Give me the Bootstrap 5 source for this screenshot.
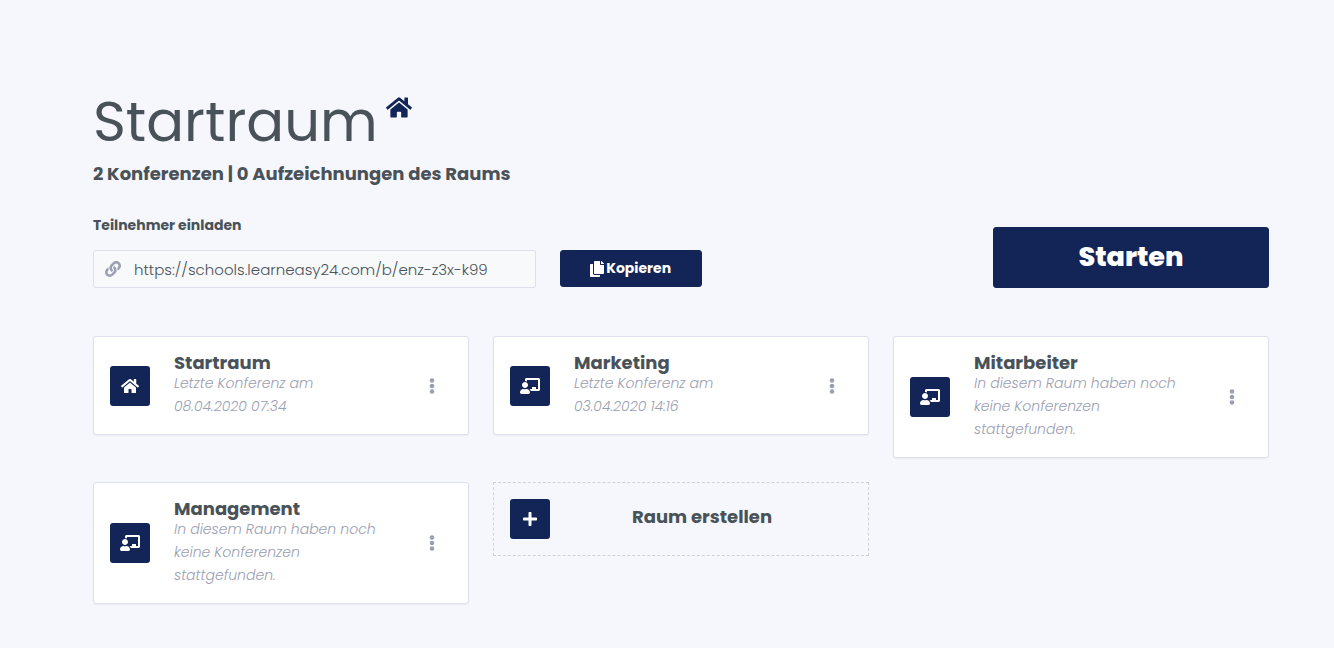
<!DOCTYPE html>
<html lang="de">
<head>
<meta charset="utf-8">
<meta name="viewport" content="width=device-width, initial-scale=1">
<title>Startraum</title>
<link href="https://cdn.jsdelivr.net/npm/bootstrap@5.3.0/dist/css/bootstrap.min.css" rel="stylesheet">
<style>
:root { --navy: #132456; --ink: #495259; --soft: #9aa0b2; --line: #dce0ed; }
body { background: #f6f7fc; color: var(--ink); font-family: Poppins, Inter, "Liberation Sans", sans-serif; font-size: 15px; }
.page { padding: 88px 65px 40px 93px; }
.icon { fill: currentColor; flex: none; display: block; }
.room-title { font-size: 56px; font-weight: 400; line-height: 67px; }
.room-title svg { color: var(--navy); margin-top: 8px; }
.room-stats { font-size: 18px; font-weight: 700; line-height: 22px; margin-top: 8px; }
.invite-label { font-size: 14px; font-weight: 700; line-height: 20px; margin-bottom: 15px; }
.invite-row { margin-top: 30px; }
.invite-field .input-group-text { background: #f8f9fb; border-color: var(--line); color: var(--soft); border-radius: 3px; padding: 0 13px 0 11px; }
.invite-field .form-control { background: #f8f9fb; border-color: var(--line); border-left: 0; color: var(--ink); font-size: 15px; font-weight: 300; height: 38px; padding: 0; border-radius: 3px; }
.btn-navy { --bs-btn-bg: var(--navy); --bs-btn-color: #fff; --bs-btn-border-color: var(--navy); --bs-btn-hover-bg: #1d3272; --bs-btn-hover-color: #fff; --bs-btn-active-bg: #0d1a40; --bs-btn-active-color: #fff; --bs-btn-border-radius: 3px; font-weight: 700; }
.btn-copy { width: 142px; height: 37px; font-size: 14px; padding: 0; gap: 2px; }
.btn-start { height: 61px; font-size: 27px; font-weight: 800; line-height: 1; padding: 0 0 2px; }
.rooms { margin-top: 24px; }
.room-card { border: 1px solid var(--line); border-radius: 3px; box-shadow: 0 1px 2px rgba(0, 0, 0, .05); color: var(--ink); }
.room-card .card-body { padding: 16px; }
.tile { width: 40px; height: 40px; border-radius: 3px; background: var(--navy); color: #fff; flex: none; }
.room-name { font-size: 18px; font-weight: 700; line-height: 19px; margin: 0; }
.room-info { font-size: 14px; font-style: italic; font-weight: 300; line-height: 23px; color: var(--soft); margin: 0; }
.room-text { width: 210px; }
.menu-btn { color: var(--soft); width: 20px; height: 24px; margin-right: 10px; }
.room-new { border: 1px dashed #d0d2d6; background: transparent; box-shadow: none; border-radius: 0; }
.room-new .room-name { padding: 0 22px 6px 0; }
</style>
</head>
<body>
<svg class="d-none" aria-hidden="true">
  <symbol id="home" viewBox="0 0 576 512"><path d="M280.37 148.26L96 300.11V464a16 16 0 0 0 16 16l112.06-.29a16 16 0 0 0 15.92-16V368a16 16 0 0 1 16-16h64a16 16 0 0 1 16 16v95.64a16 16 0 0 0 16 16.05L464 480a16 16 0 0 0 16-16V300L295.67 148.26a12.19 12.19 0 0 0-15.3 0zM571.6 251.47L488 182.56V44.05a12 12 0 0 0-12-12h-56a12 12 0 0 0-12 12v72.61L318.47 43a48 48 0 0 0-61 0L4.34 251.47a12 12 0 0 0-1.6 16.9l25.5 31A12 12 0 0 0 45.15 301l235.22-193.74a12.19 12.19 0 0 1 15.3 0L530.9 301a12 12 0 0 0 16.9-1.6l25.5-31a12 12 0 0 0-1.7-16.93z"/></symbol>
  <symbol id="link" viewBox="0 0 512 512"><path d="M326.612 185.391c59.747 59.809 58.927 155.698.36 214.59-.11.12-.24.25-.36.37l-67.2 67.2c-59.27 59.27-155.699 59.262-214.96 0-59.27-59.26-59.27-155.7 0-214.96l37.106-37.106c9.84-9.84 26.786-3.3 27.294 10.606.648 17.722 3.826 35.527 9.69 52.721 1.986 5.822.567 12.262-3.783 16.612l-13.087 13.087c-28.026 28.026-28.905 73.66-1.155 101.96 28.024 28.579 74.086 28.749 102.325.51l67.2-67.19c28.191-28.191 28.073-73.757 0-101.83-3.701-3.694-7.429-6.564-10.341-8.569a16.037 16.037 0 0 1-6.947-12.606c-.396-10.567 3.348-21.456 11.698-29.806l21.054-21.055c5.521-5.521 14.182-6.199 20.584-1.731a152.482 152.482 0 0 1 20.522 17.197zM467.547 44.449c-59.261-59.262-155.69-59.27-214.96 0l-67.2 67.2c-.12.12-.25.25-.36.37-58.566 58.892-59.387 154.781.36 214.59a152.454 152.454 0 0 0 20.521 17.196c6.402 4.468 15.064 3.789 20.584-1.731l21.054-21.055c8.35-8.35 12.094-19.239 11.698-29.806a16.037 16.037 0 0 0-6.947-12.606c-2.912-2.005-6.64-4.875-10.341-8.569-28.073-28.073-28.191-73.639 0-101.83l67.2-67.19c28.239-28.239 74.3-28.069 102.325.51 27.75 28.3 26.872 73.934-1.155 101.96l-13.087 13.087c-4.35 4.35-5.769 10.79-3.783 16.612 5.864 17.194 9.042 34.999 9.69 52.721.509 13.906 17.454 20.446 27.294 10.606l37.106-37.106c59.271-59.259 59.271-155.699.001-214.959z"/></symbol>
  <symbol id="copy" viewBox="0 0 448 512"><path d="M320 448v40c0 13.255-10.745 24-24 24H24c-13.255 0-24-10.745-24-24V120c0-13.255 10.745-24 24-24h72v296c0 30.879 25.121 56 56 56h168zm0-344V0H152c-13.255 0-24 10.745-24 24v368c0 13.255 10.745 24 24 24h272c13.255 0 24-10.745 24-24V128H344c-13.2 0-24-10.8-24-24zm120.971-31.029L375.029 7.029A24 24 0 0 0 358.059 0H352v96h96v-6.059a24 24 0 0 0-7.029-16.97z"/></symbol>
  <symbol id="teacher" viewBox="0 0 640 512"><path d="M208 352c-2.39 0-4.78.35-7.06 1.09C187.98 357.3 174.35 360 160 360c-14.35 0-27.98-2.7-40.95-6.91-2.28-.74-4.66-1.09-7.05-1.09C49.94 352-.33 402.48 0 464.62.14 490.88 21.73 512 48 512h224c26.27 0 47.86-21.12 48-47.38.33-62.14-49.94-112.62-112-112.62zm-48-32c53.02 0 96-42.98 96-96s-42.98-96-96-96-96 42.98-96 96 42.98 96 96 96zM592 0H208c-26.47 0-48 22.25-48 49.59V96c23.42 0 45.1 6.78 64 17.8V64h352v288h-64v-64H384v64h-76.24c19.1 16.69 33.12 38.73 39.69 64H592c26.47 0 48-22.25 48-49.59V49.59C640 22.25 618.47 0 592 0z"/></symbol>
  <symbol id="plus" viewBox="0 0 448 512"><path d="M416 208H272V64c0-17.67-14.33-32-32-32h-32c-17.67 0-32 14.33-32 32v144H32c-17.67 0-32 14.33-32 32v32c0 17.67 14.33 32 32 32h144v144c0 17.67 14.33 32 32 32h32c17.67 0 32-14.33 32-32V304h144c17.67 0 32-14.33 32-32v-32c0-17.67-14.33-32-32-32z"/></symbol>
  <symbol id="dots" viewBox="0 0 6 16"><circle cx="3" cy="2.5" r="2.3"/><circle cx="3" cy="8" r="2.3"/><circle cx="3" cy="13.5" r="2.3"/></symbol>
</svg>

<main class="page">
  <h1 class="room-title d-flex align-items-start gap-2 m-0">Startraum
    <svg class="icon" width="26" height="23"><use href="#home"/></svg>
  </h1>
  <p class="room-stats mb-0">2 Konferenzen | 0 Aufzeichnungen des Raums</p>

  <form class="row invite-row">
    <div class="col-8">
      <label class="invite-label d-block" for="invite">Teilnehmer einladen</label>
      <div class="row">
        <div class="col-7">
          <div class="input-group invite-field">
            <span class="input-group-text"><svg class="icon" width="16" height="16"><use href="#link"/></svg></span>
            <input class="form-control" id="invite" type="text" readonly value="https://schools.learneasy24.com/b/enz-z3x-k99">
          </div>
        </div>
        <div class="col-auto">
          <button class="btn btn-navy btn-copy d-flex align-items-center justify-content-center" type="button"><svg class="icon" width="14" height="16"><use href="#copy"/></svg>Kopieren</button>
        </div>
      </div>
    </div>
    <div class="col-3 ms-auto d-flex align-items-end">
      <button class="btn btn-navy btn-start w-100" type="button">Starten</button>
    </div>
  </form>

  <section class="row align-items-start gy-4 rooms">
    <div class="col-4">
      <article class="card room-card"><div class="card-body d-flex align-items-center">
        <span class="tile d-flex align-items-center justify-content-center me-4"><svg class="icon" width="18" height="16"><use href="#home"/></svg></span>
        <div class="room-text"><h2 class="room-name">Startraum</h2><p class="room-info">Letzte Konferenz am 08.04.2020 07:34</p></div>
        <button class="btn menu-btn p-0 border-0 ms-auto d-flex align-items-center justify-content-center" type="button" aria-label="Optionen"><svg class="icon" width="6" height="16"><use href="#dots"/></svg></button>
      </div></article>
    </div>
    <div class="col-4">
      <article class="card room-card"><div class="card-body d-flex align-items-center">
        <span class="tile d-flex align-items-center justify-content-center me-4"><svg class="icon" width="20" height="16"><use href="#teacher"/></svg></span>
        <div class="room-text"><h2 class="room-name">Marketing</h2><p class="room-info">Letzte Konferenz am 03.04.2020 14:16</p></div>
        <button class="btn menu-btn p-0 border-0 ms-auto d-flex align-items-center justify-content-center" type="button" aria-label="Optionen"><svg class="icon" width="6" height="16"><use href="#dots"/></svg></button>
      </div></article>
    </div>
    <div class="col-4">
      <article class="card room-card"><div class="card-body d-flex align-items-center">
        <span class="tile d-flex align-items-center justify-content-center me-4"><svg class="icon" width="20" height="16"><use href="#teacher"/></svg></span>
        <div class="room-text"><h2 class="room-name">Mitarbeiter</h2><p class="room-info">In diesem Raum haben noch keine Konferenzen stattgefunden.</p></div>
        <button class="btn menu-btn p-0 border-0 ms-auto d-flex align-items-center justify-content-center" type="button" aria-label="Optionen"><svg class="icon" width="6" height="16"><use href="#dots"/></svg></button>
      </div></article>
    </div>
    <div class="col-4">
      <article class="card room-card"><div class="card-body d-flex align-items-center">
        <span class="tile d-flex align-items-center justify-content-center me-4"><svg class="icon" width="20" height="16"><use href="#teacher"/></svg></span>
        <div class="room-text"><h2 class="room-name">Management</h2><p class="room-info">In diesem Raum haben noch keine Konferenzen stattgefunden.</p></div>
        <button class="btn menu-btn p-0 border-0 ms-auto d-flex align-items-center justify-content-center" type="button" aria-label="Optionen"><svg class="icon" width="6" height="16"><use href="#dots"/></svg></button>
      </div></article>
    </div>
    <div class="col-4">
      <a class="card room-card room-new text-decoration-none" href="#"><div class="card-body d-flex align-items-center">
        <span class="tile d-flex align-items-center justify-content-center me-4"><svg class="icon" width="14" height="16"><use href="#plus"/></svg></span>
        <h2 class="room-name flex-grow-1 text-center">Raum erstellen</h2>
      </div></a>
    </div>
  </section>
</main>
<script src="https://cdn.jsdelivr.net/npm/bootstrap@5.3.0/dist/js/bootstrap.bundle.min.js"></script>
</body>
</html>
